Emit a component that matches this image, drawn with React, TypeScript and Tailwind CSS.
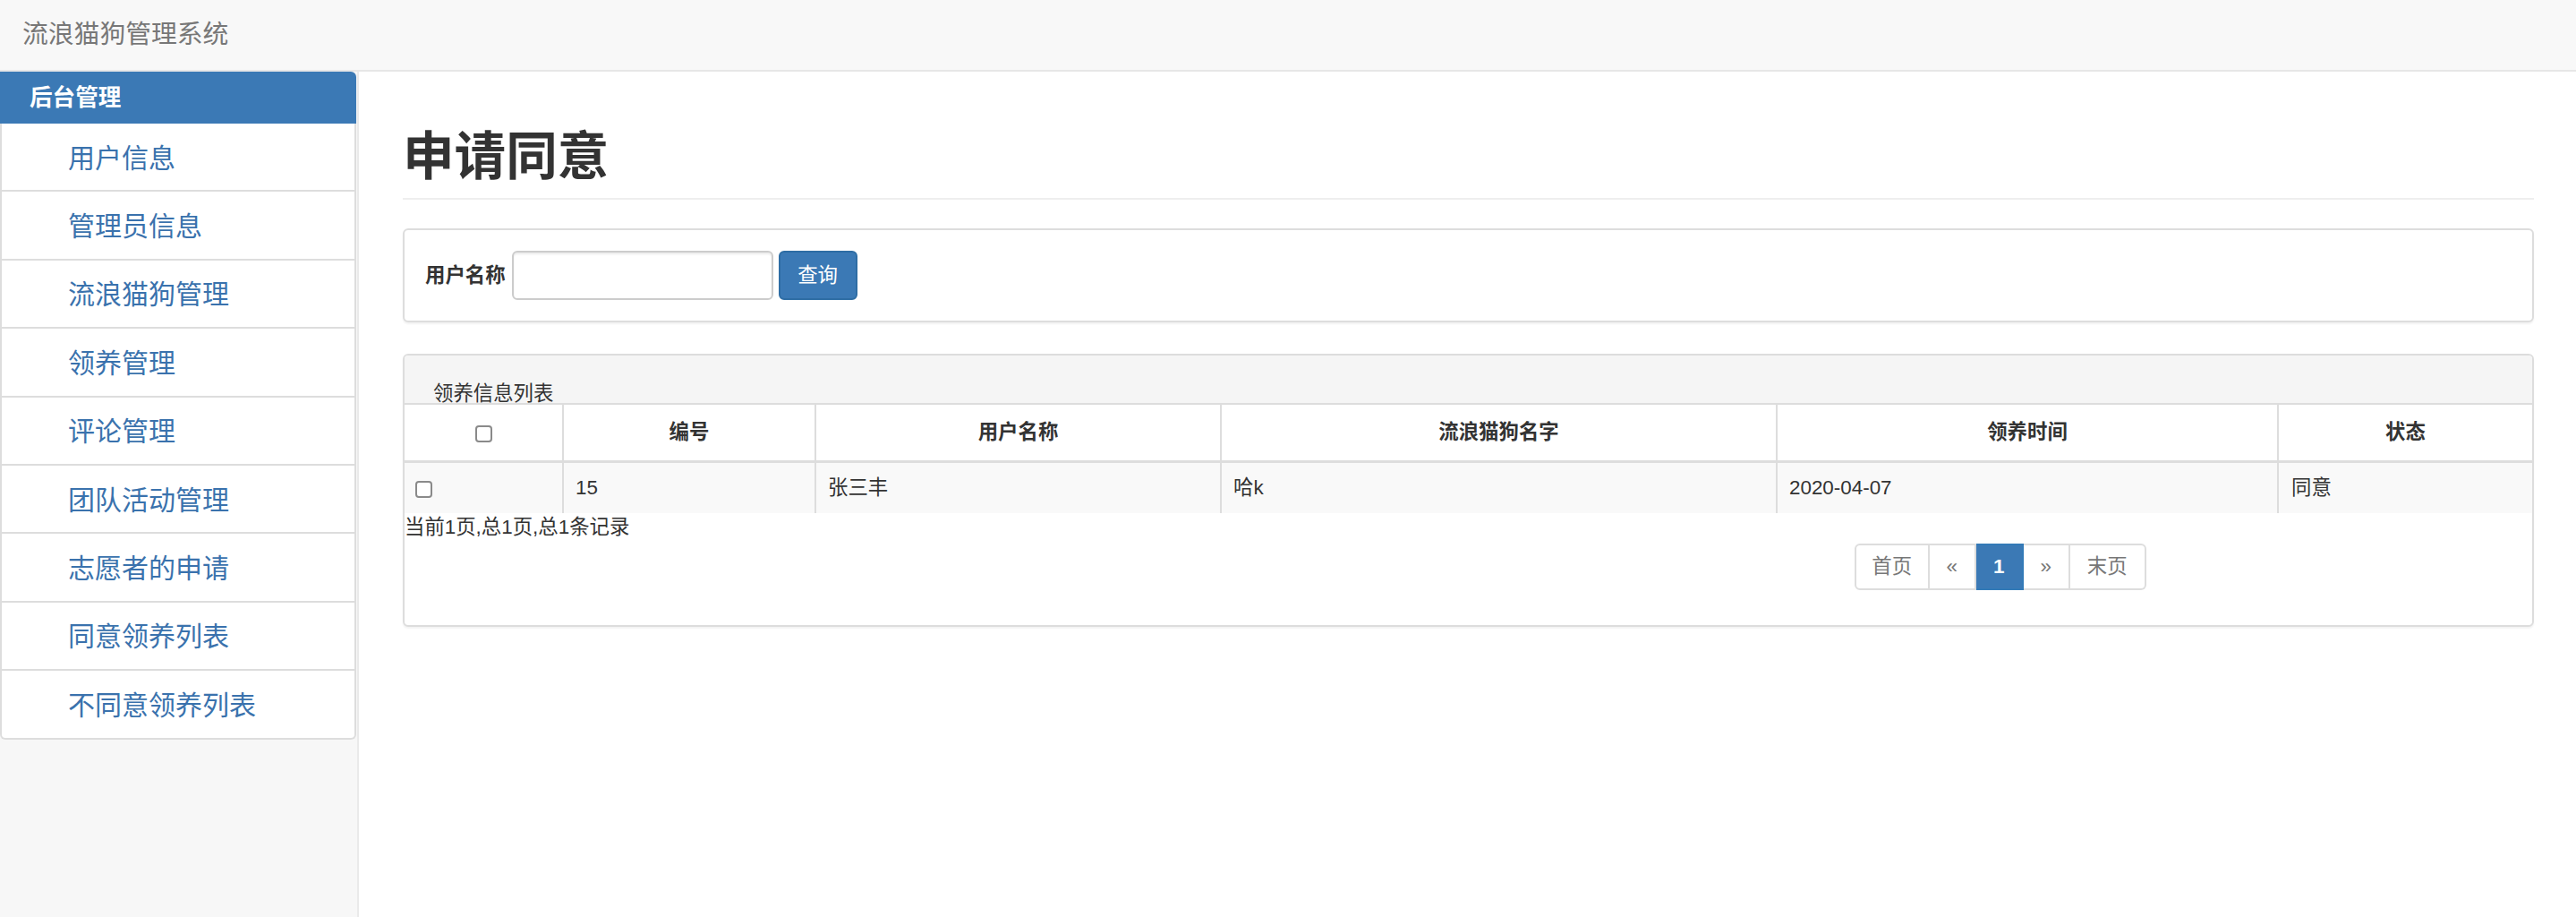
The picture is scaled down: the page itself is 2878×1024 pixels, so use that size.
import type { ReactNode } from 'react'

const navItems = [
  '用户信息',
  '管理员信息',
  '流浪猫狗管理',
  '领养管理',
  '评论管理',
  '团队活动管理',
  '志愿者的申请',
  '同意领养列表',
  '不同意领养列表',
]

interface Column {
  key: string
  label: string
  width: string
}

const columns: Column[] = [
  { key: 'check', label: '', width: 'w-[177px]' },
  { key: 'id', label: '编号', width: 'w-[282px]' },
  { key: 'user', label: '用户名称', width: 'w-[453px]' },
  { key: 'pet', label: '流浪猫狗名字', width: 'w-[621px]' },
  { key: 'time', label: '领养时间', width: 'w-[560px]' },
  { key: 'status', label: '状态', width: 'w-auto' },
]

const rows = [{ id: '15', user: '张三丰', pet: '哈k', time: '2020-04-07', status: '同意' }]

function CheckBox() {
  return <span className="inline-block h-[19px] w-[19px] rounded-[4px] border-2 border-[#8a8a8a] bg-white align-middle" />
}

function PageLink({ children, active, className }: { children: ReactNode; active?: boolean; className: string }) {
  return (
    <span
      className={`flex h-[52px] items-center justify-center border-y-2 border-r-2 text-[22.4px] ${
        active ? 'border-[#337ab7] bg-[#3b79b5] font-semibold text-white' : 'border-[#ddd] bg-white text-[#777]'
      } ${className}`}
    >
      {children}
    </span>
  )
}

function Sidebar() {
  return (
    <aside className="w-[401px] shrink-0 border-r-2 border-[#eaeaea] bg-[#f7f7f7]">
      <div className="w-[398px]">
        <div className="flex h-[58px] items-center rounded-tr-[6px] bg-[#3b79b5] pl-[33px] text-[25.6px] font-bold text-white">
          后台管理
        </div>
        {navItems.map((item, index) => (
          <div
            key={item}
            className={`flex h-[76.4px] items-center border-x-2 border-b-2 border-[#ddd] bg-white pl-[74px] text-[30px] text-[#3a72ad] ${
              index === navItems.length - 1 ? 'rounded-b-[6px]' : ''
            }`}
          >
            <span className="pt-[2px]">{item}</span>
          </div>
        ))}
      </div>
    </aside>
  )
}

function SearchPanel() {
  return (
    <div className="mt-[32px] flex h-[105px] items-center rounded-[6px] border-2 border-[#ddd] bg-white px-[23px] shadow-[0_2px_2px_rgba(0,0,0,0.05)]">
      <label className="text-[22.4px] font-bold text-[#333]">用户名称</label>
      <input
        type="text"
        className="ml-[7px] h-[55px] w-[292px] rounded-[6px] border-2 border-[#ccc] bg-white px-[19px] shadow-[inset_0_2px_2px_rgba(0,0,0,0.08)] outline-none"
      />
      <button
        type="button"
        className="ml-[6px] h-[55px] w-[88px] rounded-[6px] border-2 border-[#2e6da4] bg-[#3b79b5] text-[22.4px] text-white"
      >
        查询
      </button>
    </div>
  )
}

function ListPanel() {
  return (
    <div className="mt-[35px] overflow-hidden rounded-[6px] border-2 border-[#ddd] bg-white shadow-[0_2px_2px_rgba(0,0,0,0.05)]">
      <div className="flex h-[55px] items-end border-b-2 border-[#ddd] bg-[#f5f5f5] pl-[32px]">
        <span className="text-[22.4px] leading-[20px] text-[#333]">领养信息列表</span>
      </div>
      <table className="w-full table-fixed border-collapse text-[22.4px] text-[#333]">
        <colgroup>
          {columns.map((col) => (
            <col key={col.key} className={col.width} />
          ))}
        </colgroup>
        <thead>
          <tr className="h-[63px]">
            {columns.map((col, index) => (
              <th
                key={col.key}
                className={`border-b-[3px] border-[#ddd] text-center font-bold ${index < columns.length - 1 ? 'border-r-2' : ''}`}
              >
                {col.key === 'check' ? <CheckBox /> : col.label}
              </th>
            ))}
          </tr>
        </thead>
        <tbody>
          {rows.map((row) => (
            <tr key={row.id} className="h-[58px] bg-[#f9f9f9]">
              <td className="border-r-2 border-[#ddd] pl-[12px]">
                <CheckBox />
              </td>
              <td className="border-r-2 border-[#ddd] pl-[13px]">{row.id}</td>
              <td className="border-r-2 border-[#ddd] pl-[13px]">{row.user}</td>
              <td className="border-r-2 border-[#ddd] pl-[13px]">{row.pet}</td>
              <td className="border-r-2 border-[#ddd] pl-[13px]">{row.time}</td>
              <td className="pl-[14px]">{row.status}</td>
            </tr>
          ))}
        </tbody>
      </table>
      <div className="h-[32px] text-[22.4px] leading-[32px] text-[#333]">当前1页,总1页,总1条记录</div>
      <div className="grid grid-cols-2 pt-[2px] pb-[39px]">
        <div />
        <div className="flex justify-center">
          <PageLink className="w-[84px] rounded-l-[6px] border-l-2">首页</PageLink>
          <PageLink className="w-[52px]">«</PageLink>
          <PageLink className="w-[53px]" active>
            1
          </PageLink>
          <PageLink className="w-[52px]">»</PageLink>
          <PageLink className="w-[85px] rounded-r-[6px]">末页</PageLink>
        </div>
      </div>
    </div>
  )
}

export default function App() {
  return (
    <div className="flex h-[1024px] w-full flex-col overflow-hidden bg-white font-['Liberation_Sans','Noto_Sans_CJK_SC',sans-serif]">
      <header className="flex h-[80px] shrink-0 items-center border-b-2 border-[#e7e7e7] bg-[#f8f8f8] pl-[25px]">
        <span className="text-[28.8px] text-[#777]">流浪猫狗管理系统</span>
      </header>
      <div className="flex flex-1">
        <Sidebar />
        <main className="flex-1 pl-[49px] pr-[47px]">
          <div className="border-b-2 border-[#eee] pt-[63px] pb-[14px]">
            <h1 className="h-[64px] text-[57.6px] font-bold leading-[64px] text-[#333]">申请同意</h1>
          </div>
          <SearchPanel />
          <ListPanel />
        </main>
      </div>
    </div>
  )
}
